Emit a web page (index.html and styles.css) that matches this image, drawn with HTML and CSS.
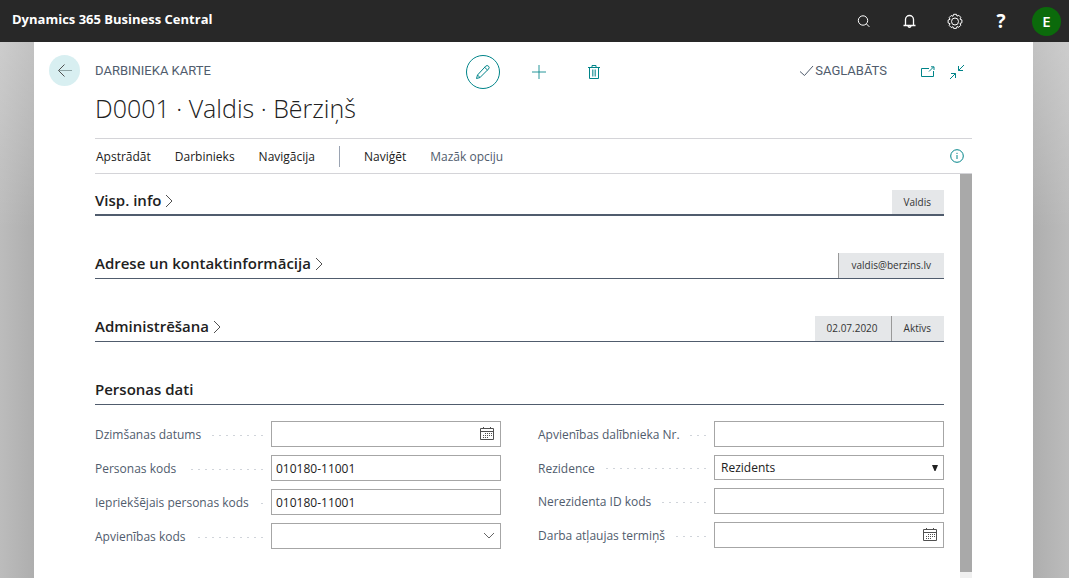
FILE: index.html
```
<!DOCTYPE html>
<html lang="lv">
<head>
<meta charset="utf-8">
<title>Darbinieka karte</title>
<link rel="stylesheet" href="styles.css">
</head>
<body>
<header class="topbar">
  <a class="brand" href="#">Dynamics 365 Business Central</a>
  <nav class="top-actions">
    <button class="top-btn" aria-label="Meklēt"><svg width="16" height="16" viewBox="0 0 16 16"><circle cx="8" cy="7.500" r="4.700"/><path d="M11.400 10.900 14.400 13.900"/></svg></button>
    <button class="top-btn" aria-label="Paziņojumi"><svg width="16" height="16" viewBox="0 0 16 16"><path d="M2.500 12.500h12M4.500 12.300V6.500a4 4 0 0 1 8 0v5.800M7 13.200a1.600 1.600 0 0 0 3 0" stroke-width="1.300"/></svg></button>
    <button class="top-btn" aria-label="Iestatījumi"><svg width="18" height="18" viewBox="0 0 18 18"><circle cx="9" cy="9.500" r="3.500"/><path d="M7.600 2.300h2.800l.6 1.800 1.800-.8 2 2-.8 1.800 1.900.8v2.800l-1.900.8.8 1.800-2 2-1.800-.8-.6 1.900H7.600L7 14.700l-1.800.8-2-2 .8-1.800-1.900-.8V8.100L4 7.300l-.8-1.800 2-2 1.800.8Z" stroke-linejoin="round"/></svg></button>
    <button class="top-btn help" aria-label="Palīdzība">?</button>
    <button class="avatar" aria-label="Konts">E</button>
  </nav>
</header>
<main class="backdrop">
  <div class="sheet">
    <div class="back-col">
      <button class="back" aria-label="Atpakaļ"><svg width="16" height="16" viewBox="0 0 16 16"><path d="M1.500 7.500H15" stroke="#8fa5a6"/><path d="M7.500 1.500 1.500 7.500l6 6"/></svg></button>
    </div>
    <div class="content">
      <div class="title-row">
        <span class="page-type">DARBINIEKA KARTE</span>
        <div class="actions">
          <button class="edit" aria-label="Rediģēt"><svg width="16" height="16" viewBox="0 0 16 16"><path d="M1.500 14.500 2.500 11 10.700 2.200a1.900 1.900 0 0 1 2.800 2.800L5 13.500ZM9.700 3.300l2.800 2.800M2.500 11 5 13.500"/></svg></button>
          <button class="act" aria-label="Jauns"><svg width="16" height="16" viewBox="0 0 16 16"><path d="M8 1v14M1 8h14" opacity=".85"/></svg></button>
          <button class="act delete" aria-label="Dzēst"><svg width="16" height="16" viewBox="0 0 16 16"><path d="M2 3.500h12M6 3V1.500h4V3M3.500 3.500v11h9v-11"/><path d="M6.500 5.500v7M8 5.500v7M9.500 5.500v7" opacity=".7"/></svg></button>
        </div>
        <div class="status">
          <span class="saved"><svg width="15" height="12" viewBox="0 0 15 12"><path d="M1 6.500 5.500 10.500 14 1"/></svg>SAGLABĀTS</span>
          <button class="act" aria-label="Atvērt jaunā logā"><svg width="16" height="16" viewBox="0 0 16 16"><path d="M10 4.500H2.500v8h12V7M10 7.500 14.500 3M12 2.800h3V6"/></svg></button>
          <button class="act" aria-label="Sakļaut"><svg width="16" height="16" viewBox="0 0 16 16"><path d="M15 1 9.500 6.500M9.500 2v4.500H14M1 15l5.500-5.500M2 9.500h4.500V14"/></svg></button>
        </div>
      </div>
      <h1 class="title">D0001 · Valdis · Bērziņš</h1>
      <nav class="menu">
        <a href="#">Apstrādāt</a><a href="#">Darbinieks</a><a href="#">Navigācija</a>
        <span class="divider"></span>
        <a href="#">Naviģēt</a><a class="muted" href="#">Mazāk opciju</a>
        <button class="act info" aria-label="Informācija"><svg width="16" height="16" viewBox="0 0 16 16"><circle cx="8" cy="8" r="6.300"/><path d="M8 7v4M8 4.800v1.200"/></svg></button>
      </nav>
      <div class="scroll">
        <div class="sections">
          <section class="head first"><h2>Visp. info<svg width="8" height="14" viewBox="0 0 8 14"><path d="M1 1l6 6-6 6"/></svg></h2><div class="tags"><span>Valdis</span></div></section>
          <section class="head"><h2>Adrese un kontaktinformācija<svg width="8" height="14" viewBox="0 0 8 14"><path d="M1 1l6 6-6 6"/></svg></h2><div class="tags"><span class="lined">valdis@berzins.lv</span></div></section>
          <section class="head"><h2>Administrēšana<svg width="8" height="14" viewBox="0 0 8 14"><path d="M1 1l6 6-6 6"/></svg></h2><div class="tags"><span>02.07.2020</span><span class="lined">Aktīvs</span></div></section>
          <section class="head"><h2>Personas dati</h2></section>
          <form class="fields">
            <div class="col">
              <div class="field"><label for="f1">Dzimšanas datums</label><i class="dots"></i><div class="box"><input id="f1" type="text"><svg class="cal" width="16" height="16" viewBox="0 0 16 16"><use href="#cal"/></svg></div></div>
              <div class="field"><label for="f2">Personas kods</label><i class="dots"></i><div class="box"><input id="f2" type="text" value="010180-11001"></div></div>
              <div class="field"><label for="f3">Iepriekšējais personas kods</label><i class="dots"></i><div class="box"><input id="f3" type="text" value="010180-11001"></div></div>
              <div class="field"><label for="f4">Apvienības kods</label><i class="dots"></i><div class="box"><input id="f4" type="text"><svg class="chev" width="12" height="8" viewBox="0 0 12 8"><path d="M1 1l5 5 5-5"/></svg></div></div>
            </div>
            <div class="col">
              <div class="field"><label for="f5">Apvienības dalībnieka Nr.</label><i class="dots"></i><div class="box"><input id="f5" type="text"></div></div>
              <div class="field short"><label for="f6">Rezidence</label><i class="dots"></i><div class="box"><select id="f6"><option>Rezidents</option></select><svg class="arrow" width="6" height="6" viewBox="0 0 6 6"><path d="M0 0h6L3.500 6h-1z"/></svg></div></div>
              <div class="field"><label for="f7">Nerezidenta ID kods</label><i class="dots"></i><div class="box"><input id="f7" type="text"></div></div>
              <div class="field"><label for="f8">Darba atļaujas termiņš</label><i class="dots"></i><div class="box"><input id="f8" type="text"><svg class="cal" width="16" height="16" viewBox="0 0 16 16"><use href="#cal"/></svg></div></div>
            </div>
          </form>
        </div>
        <div class="track"><div class="thumb"></div></div>
      </div>
    </div>
  </div>
</main>
<svg width="0" height="0" class="defs"><defs><g id="cal"><path d="M1.500 2.500h13v11h-13zM1.500 5.500h13M4.500 1v2M11.500 1v2"/><path d="M6 7.500h7M4 9.500h9M4 11.500h6" stroke-dasharray="1 1"/></g></defs></svg>
</body>
</html>
```
FILE: styles.css
```
* { box-sizing: border-box; }
body {
  margin: 0;
  height: 100vh;
  display: flex;
  flex-direction: column;
  overflow: hidden;
  font: 12px/16px "Open Sans", "Noto Sans", sans-serif;
  color: #212121;
}
button { border: 0; background: none; padding: 0; font: inherit; color: inherit; display: flex; align-items: center; justify-content: center; }
a { color: inherit; text-decoration: none; }
svg { fill: none; stroke: currentColor; flex: none; }
.defs { position: absolute; }

.topbar { display: flex; flex: none; justify-content: space-between; height: 42px; padding: 0 8px 0 12px; background: #282828; color: #fff; }
.brand { font-weight: 700; font-size: 13px; line-height: 38px; }
.top-actions { display: flex; align-items: center; }
.top-btn { width: 46px; height: 42px; }
.top-btn.help { font-size: 19px; font-weight: 700; }
.avatar { width: 29px; height: 29px; margin-left: 8px; border-radius: 50%; background: #0b6a0b; font-size: 15px; line-height: 28px; font-weight: 600; align-items: flex-start; }

.backdrop {
  flex: 1;
  min-height: 0;
  display: flex;
  padding: 0 36px 0 34px;
  background:
    linear-gradient(rgba(255, 255, 255, .25), transparent 35%),
    linear-gradient(to right, #bcbcbc, #aeaeae 34px, #aeaeae calc(100% - 36px), #bcbcbc);
}
.sheet { flex: 1; display: flex; background: #fff; padding-right: 61px; }
.back-col { width: 61px; padding: 13px 0 0 15px; flex: none; }
.back { width: 31px; height: 31px; border-radius: 50%; background: #d8eff1; color: #505050; }
.content { flex: 1; min-width: 0; display: flex; flex-direction: column; }

.title-row { display: grid; grid-template-columns: 1fr auto 1fr; align-items: center; height: 34px; margin-top: 13px; color: #505c6d; }
.page-type, .saved { font-family: Roboto, sans-serif; font-size: 13px; padding-bottom: 2px; }
.actions { display: flex; align-items: center; gap: 31px; color: #008489; }
.edit { width: 34px; height: 34px; border: 1px solid #008489; border-radius: 50%; }
.act { width: 16px; height: 16px; color: #008489; }
.delete { margin-left: 8px; }
.status { display: flex; align-items: center; justify-content: flex-end; gap: 14px; padding: 0 7px 1px 0; }
.saved { display: flex; align-items: center; gap: 1px; margin-right: 18px; }

.title { margin: 0; font-size: 25px; line-height: 38px; font-weight: 300; }
.menu { display: flex; align-items: center; gap: 24px; height: 36px; margin-top: 11px; padding: 0 7px 0 1px; border-top: 1px solid #d4d4d8; border-bottom: 1px solid #d4d4d8; }
.menu a { padding-top: 2px; }
.muted { color: #505c6d; }
.divider { width: 1px; height: 21px; background: #9aa3b2; }
.info { margin-left: auto; }

.scroll { flex: 1; min-height: 0; display: flex; gap: 16px; }
.sections { flex: 1; padding-top: 16px; }
.head { display: flex; align-items: stretch; justify-content: space-between; height: 26px; margin-bottom: 37px; border-bottom: 1px solid #505c6d; }
.head.first { border-bottom-width: 2px; }
.head h2 { display: flex; align-items: center; gap: 4px; margin: 0; font-size: 15px; line-height: 20px; font-weight: 600; height: 20px; }
.head h2 svg { margin-top: 2px; stroke: #505050; }
.tags { display: flex; }
.tags span { padding: 0 13px 0 12px; background: #e5e7e9; font-size: 10px; line-height: 25px; color: #333; }
.tags .lined { border-left: 1px solid #999; }
.fields { display: grid; grid-template-columns: 1fr 1fr; gap: 37px; margin-top: -21px; }
.col { display: flex; flex-direction: column; gap: 8px; }
.field { display: flex; align-items: center; height: 26px; }
.field.short { height: 25px; }
.field label { color: #505c6d; white-space: nowrap; padding-top: 2px; }
.dots { flex: 1; height: 1px; margin: 2px 8px 0 10px; background: repeating-linear-gradient(to left, #d0d4da 0 2px, transparent 2px 7px); }
.box { display: flex; align-items: center; width: 230px; height: 100%; flex: none; border: 1px solid #a6a6a6; padding-right: 5px; }
.box input, .box select { flex: 1; min-width: 0; height: 100%; border: 0; outline: 0; padding: 0 4px; background: none; font: inherit; color: inherit; appearance: none; }
.box select { padding-left: 6px; }
.cal { stroke: #505050; }
.chev { stroke: #666; }
.arrow { fill: #212121; stroke: none; }
.track { width: 12px; background: #f0f0f0; padding-bottom: 6px; }
.thumb { height: 100%; background: #a9a9a9; }
```
